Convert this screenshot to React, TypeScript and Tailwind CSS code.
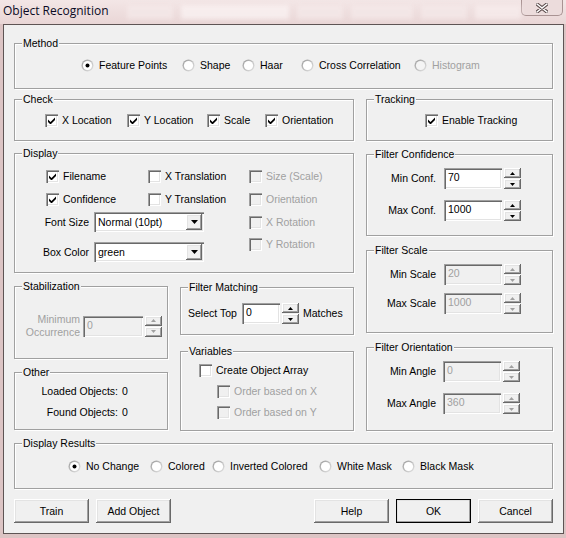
import React from 'react';

const raised =
  'bg-[#f0f0f0] shadow-[inset_-1px_-1px_0_#696969,inset_1px_1px_0_#fff,inset_-2px_-2px_0_#a0a0a0,inset_2px_2px_0_#e3e3e3]';
const sunken =
  'shadow-[inset_1px_1px_0_#a0a0a0,inset_2px_2px_0_#696969,inset_-1px_-1px_0_#fff,inset_-2px_-2px_0_#e3e3e3]';

type GroupProps = { label: string; className?: string; children?: React.ReactNode };

const Group = ({ label, className = '', children }: GroupProps) => (
  <div
    className={`relative shrink-0 border border-[#a0a0a0] shadow-[inset_1px_1px_0_#fff,1px_1px_0_#fff] ${className}`}
  >
    <span className="absolute -top-[7px] left-[7px] bg-[#f0f0f0] px-[1px] leading-[13px]">{label}</span>
    {children}
  </div>
);

const Check = ({ checked = false, disabled = false }: { checked?: boolean; disabled?: boolean }) => (
  <span
    className={`inline-flex w-[13px] h-[13px] shrink-0 items-center justify-center ${sunken} ${
      disabled ? 'bg-[#f0f0f0]' : 'bg-white'
    }`}
  >
    {checked && (
      <svg width="7" height="7" viewBox="0 0 7 7">
        <path d="M0 2.5L2.5 5L7 0.5V3L2.5 7.5L0 5Z" fill="#000" />
      </svg>
    )}
  </span>
);

const Radio = ({ checked = false, disabled = false }: { checked?: boolean; disabled?: boolean }) => (
  <svg width="13" height="13" viewBox="0 0 13 13" className="shrink-0">
    <defs>
      <linearGradient id="rg" x1="0" y1="0" x2="1" y2="1">
        <stop offset="0" stopColor="#9a9a9a" />
        <stop offset="1" stopColor="#e6e6e6" />
      </linearGradient>
    </defs>
    <circle cx="6.5" cy="6.5" r="6" fill="url(#rg)" />
    <circle cx="6.5" cy="6.5" r="4.6" fill={disabled ? '#f4f4f4' : '#fff'} />
    {checked && <circle cx="6.5" cy="6.5" r="2" fill="#000" />}
  </svg>
);

const CheckItem = ({
  label,
  checked,
  disabled,
  className = '',
}: {
  label: string;
  checked?: boolean;
  disabled?: boolean;
  className?: string;
}) => (
  <div className={`flex h-[13px] items-center shrink-0 ${className}`}>
    <Check checked={checked} disabled={disabled} />
    <span className={`ml-[4px] whitespace-nowrap ${disabled ? 'text-[#a0a0a0]' : ''}`}>{label}</span>
  </div>
);

const RadioItem = ({
  label,
  checked,
  disabled,
  className = '',
}: {
  label: string;
  checked?: boolean;
  disabled?: boolean;
  className?: string;
}) => (
  <div className={`flex h-[13px] items-center shrink-0 ${className}`}>
    <Radio checked={checked} disabled={disabled} />
    <span className={`ml-[5px] whitespace-nowrap ${disabled ? 'text-[#a0a0a0]' : ''}`}>{label}</span>
  </div>
);

const Arrow = ({ up, color }: { up: boolean; color: string }) => (
  <svg width="5" height="3" viewBox="0 0 5 3">
    <path d={up ? 'M2.5 0L5 3H0Z' : 'M0 0H5L2.5 3Z'} fill={color} />
  </svg>
);

const Spin = ({ disabled = false }: { disabled?: boolean }) => {
  const c = disabled ? '#a0a0a0' : '#000';
  return (
    <div className="ml-[2px] flex flex-col gap-[1px]">
      <div className={`${raised} w-[17px] h-[10px] flex items-center justify-center`}>
        <Arrow up color={c} />
      </div>
      <div className={`${raised} w-[17px] h-[10px] flex items-center justify-center`}>
        <Arrow up={false} color={c} />
      </div>
    </div>
  );
};

const NumField = ({ value, disabled = false, w = 'w-[58px]' }: { value: string; disabled?: boolean; w?: string }) => (
  <div className="flex items-center">
    <div
      className={`${w} h-[21px] ${sunken} ${disabled ? 'bg-[#f0f0f0] text-[#a0a0a0]' : 'bg-white'} pl-[4px] pt-[3px]`}
    >
      {value}
    </div>
    <Spin disabled={disabled} />
  </div>
);

const Combo = ({ value }: { value: string }) => (
  <div className={`w-[110px] h-[20px] bg-white ${sunken} flex items-center justify-between pl-[4px] pr-[2px]`}>
    <span>{value}</span>
    <div className={`${raised} w-[16px] h-[16px] flex items-center justify-center`}>
      <svg width="7" height="4" viewBox="0 0 7 4">
        <path d="M0 0H7L3.5 4Z" fill="#000" />
      </svg>
    </div>
  </div>
);

const Button = ({ label, isDefault = false }: { label: string; isDefault?: boolean }) => (
  <div
    className={`w-[75px] h-[24px] flex items-center justify-center ${raised} ${
      isDefault ? 'outline outline-1 outline-black -outline-offset-1' : ''
    }`}
  >
    {label}
  </div>
);

const FilterRow = ({
  label,
  value,
  disabled,
  gap = 'ml-[8px]',
  className = '',
}: {
  label: string;
  value: string;
  disabled?: boolean;
  gap?: string;
  className?: string;
}) => (
  <div className={`flex items-center ${className}`}>
    <span className="w-[69px] text-right whitespace-nowrap">{label}</span>
    <div className={gap}>
      <NumField value={value} disabled={disabled} />
    </div>
  </div>
);

const TitleBar = () => (
  <div className="h-[24px] shrink-0 flex items-start bg-[linear-gradient(180deg,#f3e6e6,#e9d6d6)]">
    <span className="ml-[3px] mt-[3px] font-['Open_Sans',sans-serif] text-[12px] leading-[15px] text-[#0a0a24] whitespace-nowrap">
      Object Recognition
    </span>
    <div className="ml-[18px] mt-[5px] flex gap-[8px] blur-[2px] opacity-70">
      <div className="w-[46px] h-[14px] bg-[#f5eaea]" />
      <div className="w-[108px] h-[14px] bg-[#fbf4f4]" />
      <div className="w-[46px] h-[14px] bg-[#f5eaea]" />
      <div className="w-[62px] h-[14px] bg-[#f5eaea]" />
      <div className="w-[46px] h-[14px] bg-[#f5eaea]" />
      <div className="w-[46px] h-[14px] bg-[#f8eeee]" />
    </div>
    <div className="ml-auto mr-[3px] w-[46px] h-[16px] rounded-b-[5px] border border-t-0 border-[#a99393] bg-[#ecdcdc] flex items-center justify-center">
      <svg width="12" height="10" viewBox="0 0 12 10">
        <path
          d="M1 1L11 9M11 1L1 9"
          stroke="#5a4a4a"
          strokeWidth="3.4"
          strokeLinecap="round"
        />
        <path d="M1 1L11 9M11 1L1 9" stroke="#fff" strokeWidth="1.6" strokeLinecap="round" />
      </svg>
    </div>
  </div>
);

export default function App() {
  return (
    <div className="w-[566px] h-[538px] bg-[#dcc4c4] flex flex-col overflow-hidden font-['Liberation_Sans',Arial,sans-serif] text-[10.5px] leading-[13px] text-black">
      <TitleBar />
      <div className="ml-[3px] w-[561px] h-[510px] shrink-0 bg-[#f0f0f0] border border-[#5e5454] pt-[18px] pl-[10px]">
        {/* Method */}
        <Group label="Method" className="w-[539px] h-[46px]">
          <div className="flex pl-[66px] pt-[15px]">
            <RadioItem label="Feature Points" checked className="w-[101px]" />
            <RadioItem label="Shape" className="w-[60px]" />
            <RadioItem label="Haar" className="w-[59px]" />
            <RadioItem label="Cross Correlation" className="w-[113px]" />
            <RadioItem label="Histogram" disabled />
          </div>
        </Group>

        <div className="mt-[10px] flex gap-[12px]">
          {/* left column */}
          <div className="w-[340px] flex flex-col">
            <Group label="Check" className="h-[42px]">
              <div className="flex pl-[30px] pt-[14px]">
                <CheckItem label="X Location" checked className="w-[82px]" />
                <CheckItem label="Y Location" checked className="w-[80px]" />
                <CheckItem label="Scale" checked className="w-[58px]" />
                <CheckItem label="Orientation" checked />
              </div>
            </Group>

            <Group label="Display" className="mt-[12px] h-[120px]">
              <div className="flex pt-[16px]">
                <div className="w-[234px] flex flex-col">
                  <div className="flex pl-[31px]">
                    <CheckItem label="Filename" checked className="w-[102px]" />
                    <CheckItem label="X Translation" />
                  </div>
                  <div className="flex pl-[31px] mt-[10px]">
                    <CheckItem label="Confidence" checked className="w-[102px]" />
                    <CheckItem label="Y Translation" />
                  </div>
                  <div className="flex items-center mt-[6px]">
                    <span className="w-[74px] text-right">Font Size</span>
                    <div className="ml-[5px]">
                      <Combo value="Normal (10pt)" />
                    </div>
                  </div>
                  <div className="flex items-center mt-[10px]">
                    <span className="w-[74px] text-right">Box Color</span>
                    <div className="ml-[5px]">
                      <Combo value="green" />
                    </div>
                  </div>
                </div>
                <div className="flex flex-col">
                  <CheckItem label="Size (Scale)" disabled />
                  <CheckItem label="Orientation" disabled className="mt-[10px]" />
                  <CheckItem label="X Rotation" disabled className="mt-[10px]" />
                  <CheckItem label="Y Rotation" disabled className="mt-[9px]" />
                </div>
              </div>
            </Group>

            <div className="mt-[13px] flex gap-[12px]">
              <div className="w-[154px] flex flex-col">
                <Group label="Stabilization" className="h-[73px]">
                  <div className="flex items-center pt-[26px]">
                    <span className="w-[65px] text-right text-[#a0a0a0] leading-[13px]">
                      Minimum
                      <br />
                      Occurrence
                    </span>
                    <div className="ml-[3px]">
                      <NumField value="0" disabled w="w-[60px]" />
                    </div>
                  </div>
                </Group>
                <Group label="Other" className="mt-[13px] h-[58px]">
                  <div className="pt-[12px] flex">
                    <span className="w-[103px] text-right">Loaded Objects:</span>
                    <span className="ml-[4px]">0</span>
                  </div>
                  <div className="mt-[8px] flex">
                    <span className="w-[103px] text-right">Found Objects:</span>
                    <span className="ml-[4px]">0</span>
                  </div>
                </Group>
              </div>

              <div className="w-[174px] flex flex-col pt-[1px]">
                <Group label="Filter Matching" className="h-[48px]">
                  <div className="flex items-center pl-[7px] pt-[15px]">
                    <span className="w-[54px] whitespace-nowrap">Select Top</span>
                    <NumField value="0" w="w-[38px]" />
                    <span className="ml-[4px]">Matches</span>
                  </div>
                </Group>
                <Group label="Variables" className="mt-[16px] h-[80px]">
                  <div className="pl-[18px] pt-[12px] flex flex-col">
                    <CheckItem label="Create Object Array" />
                    <CheckItem label="Order based on X" disabled className="ml-[18px] mt-[8px]" />
                    <CheckItem label="Order based on Y" disabled className="ml-[18px] mt-[8px]" />
                  </div>
                </Group>
              </div>
            </div>
          </div>

          {/* right column */}
          <div className="w-[187px] flex flex-col">
            <Group label="Tracking" className="h-[42px]">
              <div className="pl-[58px] pt-[14px] flex">
                <CheckItem label="Enable Tracking" checked />
              </div>
            </Group>
            <Group label="Filter Confidence" className="mt-[13px] h-[82px]">
              <div className="pt-[13px]">
                <FilterRow label="Min Conf." value="70" />
                <FilterRow label="Max Conf." value="1000" className="mt-[11px]" />
              </div>
            </Group>
            <Group label="Filter Scale" className="mt-[14px] h-[83px]">
              <div className="pt-[13px]">
                <FilterRow label="Min Scale" value="20" disabled />
                <FilterRow label="Max Scale" value="1000" disabled className="mt-[8px]" />
              </div>
            </Group>
            <Group label="Filter Orientation" className="mt-[14px] h-[84px]">
              <div className="pt-[13px]">
                <FilterRow label="Min Angle" value="0" disabled gap="ml-[7px]" />
                <FilterRow label="Max Angle" value="360" disabled gap="ml-[7px]" className="mt-[11px]" />
              </div>
            </Group>
          </div>
        </div>

        <Group label="Display Results" className="mt-[12px] w-[539px] h-[46px]">
          <div className="flex pl-[53px] pt-[16px]">
            <RadioItem label="No Change" checked className="w-[82px]" />
            <RadioItem label="Colored" className="w-[62px]" />
            <RadioItem label="Inverted Colored" className="w-[107px]" />
            <RadioItem label="White Mask" className="w-[83px]" />
            <RadioItem label="Black Mask" />
          </div>
        </Group>

        <div className="mt-[10px] w-[539px] flex justify-between">
          <div className="flex gap-[7px]">
            <Button label="Train" />
            <Button label="Add Object" />
          </div>
          <div className="flex gap-[7px]">
            <Button label="Help" />
            <Button label="OK" isDefault />
            <Button label="Cancel" />
          </div>
        </div>
      </div>
    </div>
  );
}
